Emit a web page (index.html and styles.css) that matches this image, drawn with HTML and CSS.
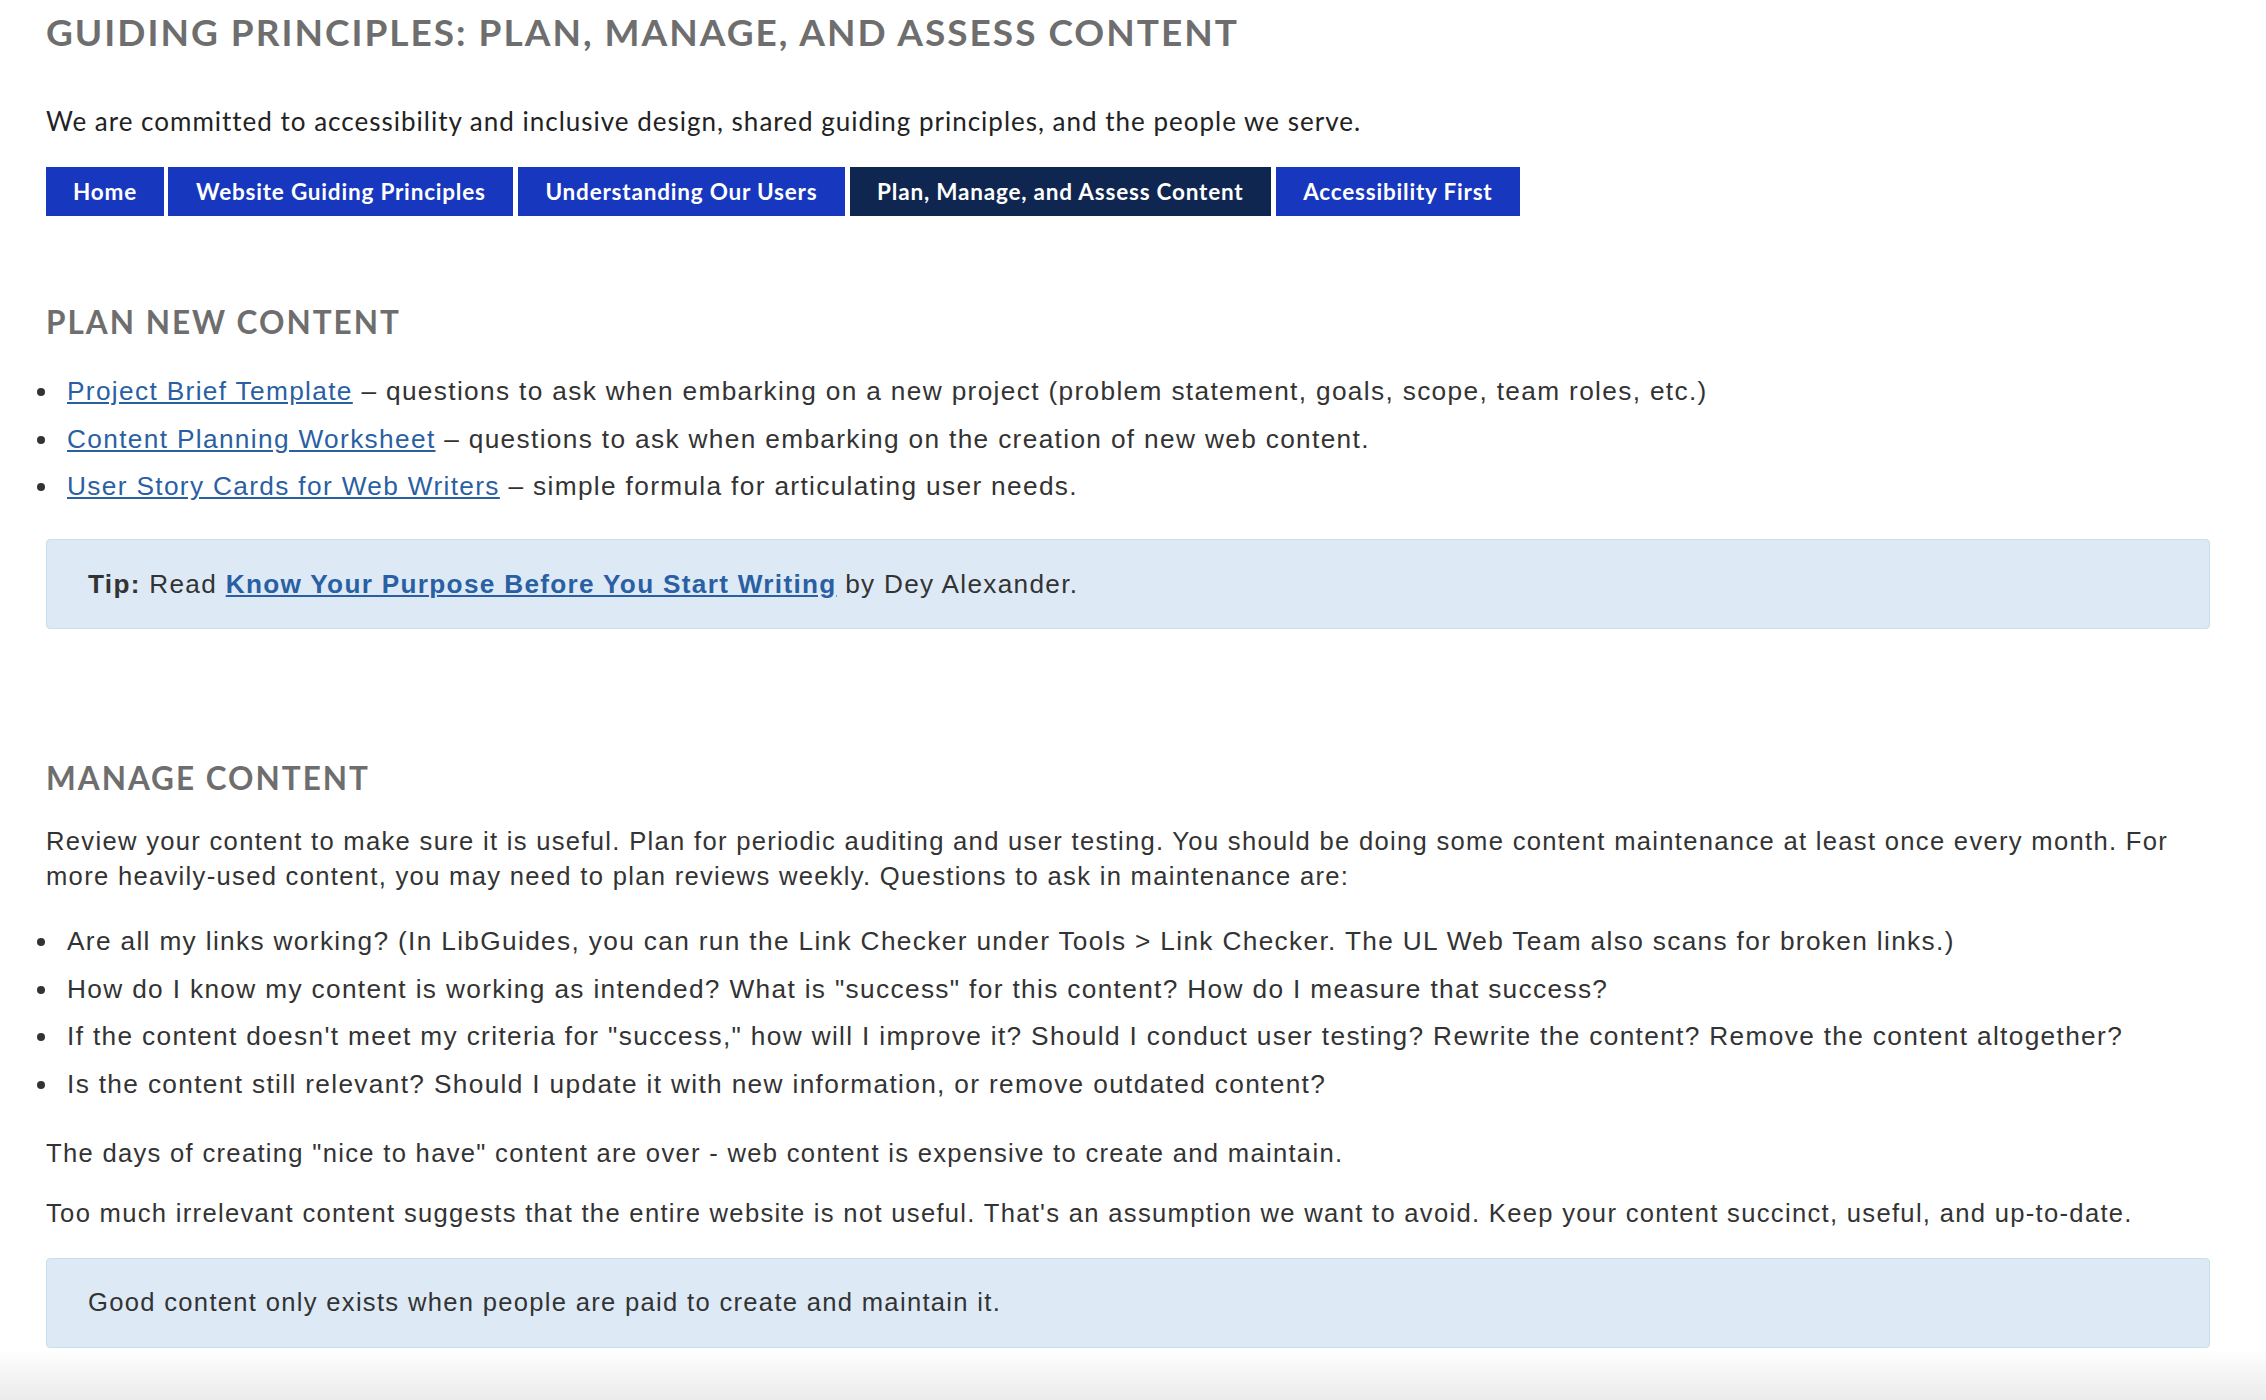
FILE: index.html
```html
<!DOCTYPE html>
<html lang="en">
<head>
<meta charset="utf-8">
<title>Guiding Principles: Plan, Manage, and Assess Content</title>
<link rel="stylesheet" href="styles.css">
</head>
<body>
<main class="page">
  <h1 class="title">Guiding Principles: Plan, Manage, and Assess Content</h1>
  <p class="lead">We are committed to accessibility and inclusive design, shared guiding principles, and the people we serve.</p>
  <nav class="tabs">
    <a class="tab" href="#">Home</a>
    <a class="tab" href="#">Website Guiding Principles</a>
    <a class="tab" href="#">Understanding Our Users</a>
    <a class="tab tab-active" href="#">Plan, Manage, and Assess Content</a>
    <a class="tab" href="#">Accessibility First</a>
  </nav>

  <section class="section section-plan">
    <h2 class="section-title">Plan New Content</h2>
    <ul class="list list-plan">
      <li><a href="#">Project Brief Template</a> – questions to ask when embarking on a new project (problem statement, goals, scope, team roles, etc.)</li>
      <li><a href="#">Content Planning Worksheet</a> – questions to ask when embarking on the creation of new web content.</li>
      <li><a href="#">User Story Cards for Web Writers</a> – simple formula for articulating user needs.</li>
    </ul>
    <div class="callout callout-tip"><strong>Tip:</strong> Read <a class="strong-link" href="#">Know Your Purpose Before You Start Writing</a> by Dey Alexander.</div>
  </section>

  <section class="section section-manage">
    <h2 class="section-title">Manage Content</h2>
    <p class="text text-intro">Review your content to make sure it is useful. Plan for periodic auditing and user testing. You should be doing some content maintenance at least once every month. For more heavily-used content, you may need to plan reviews weekly. Questions to ask in maintenance are:</p>
    <ul class="list list-manage">
      <li>Are all my links working? (In LibGuides, you can run the Link Checker under Tools &gt; Link Checker. The UL Web Team also scans for broken links.)</li>
      <li>How do I know my content is working as intended? What is "success" for this content? How do I measure that success?</li>
      <li>If the content doesn't meet my criteria for "success," how will I improve it? Should I conduct user testing? Rewrite the content? Remove the content altogether?</li>
      <li>Is the content still relevant? Should I update it with new information, or remove outdated content?</li>
    </ul>
    <p class="text text-after">The days of creating "nice to have" content are over - web content is expensive to create and maintain.</p>
    <p class="text">Too much irrelevant content suggests that the entire website is not useful. That's an assumption we want to avoid. Keep your content succinct, useful, and up-to-date.</p>
    <div class="callout callout-note">Good content only exists when people are paid to create and maintain it.</div>
  </section>
</main>
</body>
</html>
```

FILE: styles.css
```css
html, body {
  margin: 0;
  padding: 0;
  background: #ffffff;
}

body {
  font-family: "Liberation Sans", Arial, sans-serif;
  font-size: 26px;
  line-height: 35px;
  color: #333333;
  letter-spacing: 1.3px;
}

body::after {
  content: "";
  position: fixed;
  left: 0;
  right: 0;
  bottom: 0;
  height: 52px;
  background: linear-gradient(to bottom, rgba(236, 236, 236, 0), #ebebeb);
  pointer-events: none;
}

.page {
  padding: 0 56px 0 46px;
}

a {
  color: #2a5fa3;
  text-decoration: underline;
}

.title {
  margin: 10px 0 0;
  font-family: Lato, "Open Sans", sans-serif;
  font-weight: 700;
  font-size: 37px;
  line-height: 44px;
  letter-spacing: 2px;
  text-transform: uppercase;
  color: #6e6e6e;
}

.lead {
  margin: 50px 0 0;
  font-family: Lato, "Open Sans", sans-serif;
  font-size: 26px;
  line-height: 35px;
  letter-spacing: 1px;
  color: #222222;
}

.tabs {
  display: flex;
  gap: 4.5px;
  margin-top: 28px;
}

.tab {
  display: block;
  height: 49px;
  padding: 0 27.6px;
  background: #1737be;
  color: #ffffff;
  font-family: Lato, "Open Sans", sans-serif;
  font-weight: 700;
  font-size: 22.5px;
  line-height: 49px;
  letter-spacing: 0.8px;
  text-decoration: none;
  white-space: nowrap;
}

.tab:first-child {
  padding: 0 27px;
}

.tab-active {
  background: #0e2650;
}

.section-title {
  margin: 0;
  font-family: Lato, "Open Sans", sans-serif;
  font-weight: 700;
  font-size: 31.5px;
  line-height: 38px;
  letter-spacing: 2px;
  text-transform: uppercase;
  color: #6e6e6e;
}

.section-plan .section-title {
  margin-top: 87px;
}

.section-manage .section-title {
  margin-top: 130px;
}

.list {
  margin: 0;
  padding: 0 0 0 21px;
  list-style: none;
  font-size: 26.25px;
  letter-spacing: 1.34px;
}

.list li {
  margin: 0 0 12.5px;
}

.list li::before {
  content: "";
  display: inline-block;
  width: 8px;
  height: 8px;
  margin-left: -30px;
  margin-right: 22px;
  border-radius: 50%;
  background: #333333;
  vertical-align: 4px;
}

.list li:last-child {
  margin-bottom: 0;
}

.list-plan {
  margin-top: 33px;
}

.list-manage {
  margin-top: 30px;
}

.text {
  margin: 25px 0 0;
  font-size: 25.6px;
}

.text-intro {
  margin-top: 27px;
}

.text-after {
  margin-top: 34px;
}

.callout {
  margin-top: 35px;
  padding: 26.5px 41px;
  background: #ddeaf6;
  border: 1px solid #c2e2ed;
  border-radius: 4px;
}

.callout-tip {
  font-size: 26.2px;
}

.callout-note {
  margin-top: 27px;
  font-size: 25.6px;
}

.strong-link {
  font-weight: 700;
}
```
